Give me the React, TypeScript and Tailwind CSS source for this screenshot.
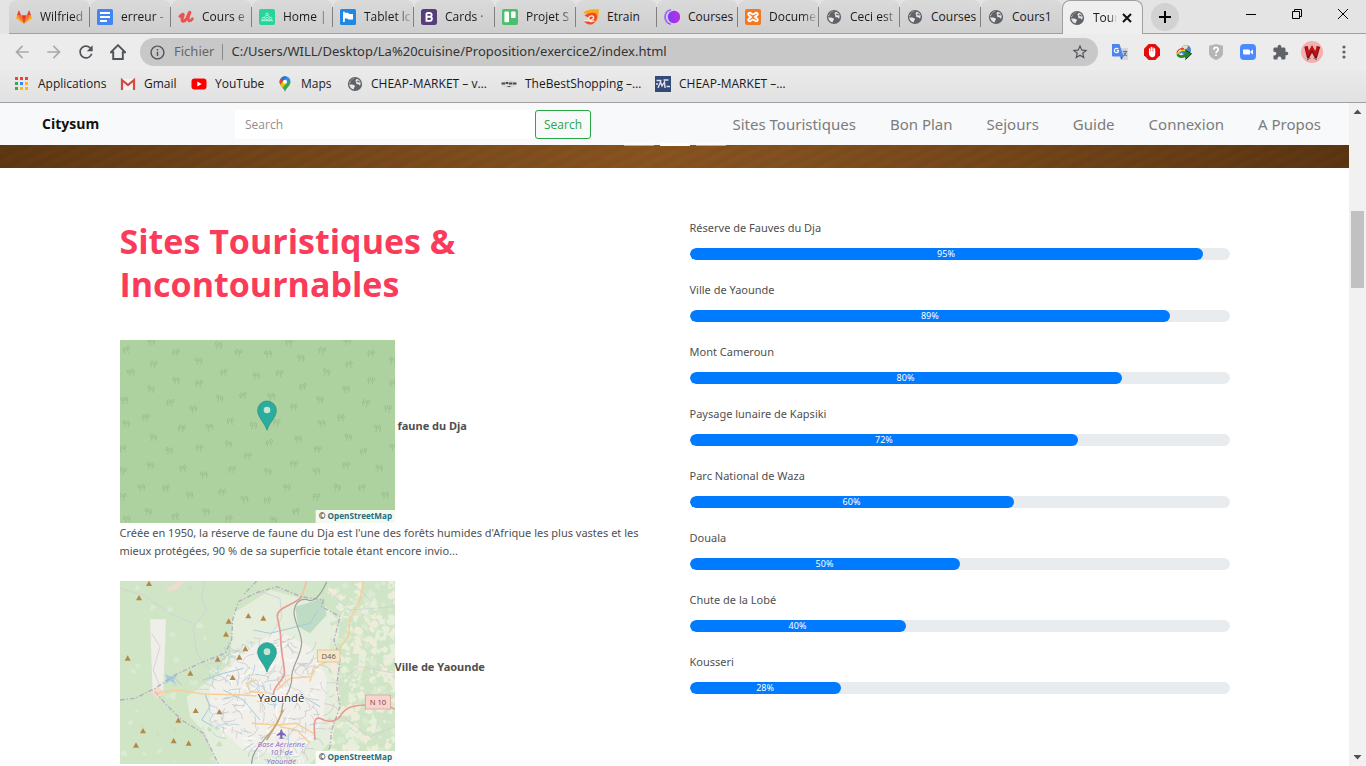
import React from "react";
import { MdArrowBack, MdArrowForward, MdRefresh, MdInfoOutline, MdStarBorder, MdExtension } from "react-icons/md";

const ui = "font-['Open_Sans','Noto_Sans',sans-serif]";
const noto = "font-['Noto_Sans','Open_Sans',sans-serif]";

/* ---------- favicons and small logos ---------- */

function Globe() {
  return (
    <svg viewBox="0 0 16 16" className="size-4 shrink-0">
      <circle cx="8" cy="8" r="7.1" fill="#5f6368" />
      <path d="M8.2 2.2 6.4 3.1 6 4.4 4.2 5.3 2.4 7.2 2.5 8.6 5.3 8.4 7.4 9.2 8.1 10.5 7 11.8 6.8 13.2 5.2 13 3.6 11.7 2.3 9.2 2.2 6.6 5.3 2.8Z" fill="#e6e6e6" />
      <path d="M3.2 5.2 5.6 3 8.6 2.4 7 4.6 4.4 6.2Z" fill="#5f6368" />
      <path d="M10 2.7 12.2 4.1 13.6 6.6 13.4 9.1 12.3 9.4 11.7 8.3 9.8 8.2 9 6.9 9.5 5.6 8.4 5.2 8.6 4Z" fill="#e6e6e6" />
      <path d="M10 4.6 12.4 5 12.8 6.4 10.6 6.2Z" fill="#5f6368" />
    </svg>
  );
}

function Gitlab() {
  return (
    <svg viewBox="0 0 16 16" className="size-4 shrink-0">
      <path d="M8 15 5.1 6.3H10.9Z" fill="#e24329" />
      <path d="M8 15 5.1 6.3H1Z" fill="#fc6d26" />
      <path d="M8 15 10.9 6.3H15Z" fill="#fc6d26" />
      <path d="M1 6.3 0 9.2 8 15Z" fill="#fca326" />
      <path d="M15 6.3 16 9.2 8 15Z" fill="#fca326" />
      <path d="M1 6.3 2.9 1 5.1 6.3ZM15 6.3 13.1 1 10.9 6.3Z" fill="#e24329" />
    </svg>
  );
}

function Docs() {
  return (
    <svg viewBox="0 0 16 16" className="size-4 shrink-0">
      <rect width="16" height="16" rx="1.5" fill="#4285f4" />
      <path d="M3 4h10M3 8h10M3 12h7" stroke="#fff" strokeWidth="1.8" />
    </svg>
  );
}

function Udemy() {
  return (
    <svg viewBox="0 0 16 16" className="size-4 shrink-0" fill="none" stroke="#ec5252" strokeLinecap="round" strokeLinejoin="round">
      <path d="M2 7.4C3 6.2 4 5 5 5.2 6 6 3.600 9.200 4 11.300 4.800 13.400 7.600 11.400 9 9 10 7 10.800 4.600 11.600 3.400" strokeWidth="3" />
      <path d="M12 3.600C10.800 6.600 9.600 10.400 10.800 11.600 11.800 12.400 13.200 11.200 14.400 9.800" strokeWidth="2.700" />
    </svg>
  );
}

function HomeFav() {
  return (
    <svg viewBox="0 0 16 16" className="size-4 shrink-0">
      <rect width="16" height="16" rx="2" fill="#26d59a" />
      <g fill="none" stroke="#b9f5e1" strokeWidth="1">
        <circle cx="8" cy="5.4" r="1.300" />
        <circle cx="4.5" cy="9.600" r="1.300" />
        <circle cx="8" cy="9.600" r="1.300" />
        <circle cx="11.5" cy="9.600" r="1.300" />
        <path d="M7 6.5 5 8.600M9 6.5 11 8.600M2 11.700h12" />
      </g>
    </svg>
  );
}

function TabletFav() {
  return (
    <svg viewBox="0 0 16 16" className="size-4 shrink-0">
      <rect width="16" height="16" rx="1.5" fill="#1e88e5" />
      <path d="M3 2.800h1.800v1h3.400L9.200 5H13v5.400H8.400l-1-.9H4.800V13H3Z" fill="#fff" />
    </svg>
  );
}

function BootstrapFav() {
  return (
    <svg viewBox="0 0 16 16" className="size-4 shrink-0">
      <rect width="16" height="16" rx="2.5" fill="#563d7c" />
      <path d="M5.5 4h3.2a1.8 1.8 0 0 1 .3 3.7H5.5m3.3 0a2.1 2.1 0 0 1 0 4.2H5.5V4" fill="none" stroke="#fff" strokeWidth="1.9" />
    </svg>
  );
}

function Trello() {
  return (
    <svg viewBox="0 0 16 16" className="size-4 shrink-0">
      <rect width="16" height="16" rx="2" fill="#4bbf6b" />
      <rect x="2.4" y="2.6" width="4.6" height="10.6" rx=".8" fill="#fff" />
      <rect x="9" y="2.6" width="4.6" height="6.4" rx=".8" fill="#fff" />
    </svg>
  );
}

function Etrain() {
  return (
    <svg viewBox="0 0 16 16" className="size-4 shrink-0">
      <path d="M.3 4.500C2 1.200 6 .2 15.800.3 15.800 5 15.600 9.500 13.500 12.500L12 5Z" fill="#f9a81b" />
      <path d="M1.500 6.500C5 3.500 10 3 13.200 4.500 15.200 8 13.500 13 9.500 15.200 5.500 16.300 2.500 14.500 1 12.200L8 10.500 5 8.500Z" fill="#ee4d23" />
      <path d="M1 11.200C4.500 12.600 10.600 11.400 10.600 8.600 10.600 6.200 6.400 6.200 5.400 9.200 4.900 12.400 8 13.600 11.400 11.600" fill="none" stroke="#f6e3da" strokeWidth="1.500" />
    </svg>
  );
}

function PurpleFav() {
  return (
    <svg viewBox="0 0 16 16" className="size-4 shrink-0">
      <defs>
        <linearGradient id="violet" x1="0" x2="1">
          <stop offset="0" stopColor="#7a3df5" />
          <stop offset="1" stopColor="#c32be8" />
        </linearGradient>
      </defs>
      <circle cx="10" cy="8" r="6.200" fill="url(#violet)" />
      <path d="M6.800.7A7.600 7.600 0 0 0 6.800 15.300" fill="none" stroke="#8b4cf3" strokeWidth="1.300" />
      <path d="M4 1.600A7.800 7.800 0 0 0 4 14.400" fill="none" stroke="#b07cf4" strokeWidth="1.200" />
    </svg>
  );
}

function Xampp() {
  return (
    <svg viewBox="0 0 16 16" className="size-4 shrink-0">
      <rect width="16" height="16" rx="2" fill="#f37623" />
      <path d="M4.800 3.600C3.200 3.600 2.600 5.600 4 6.400L6 8 4 9.600C2.600 10.400 3.200 12.400 4.800 12.400 6.200 12.400 6.200 10.600 8 10.600 9.800 10.600 9.800 12.400 11.200 12.400 12.800 12.400 13.400 10.400 12 9.600L10 8 12 6.400C13.400 5.600 12.800 3.600 11.200 3.600 9.800 3.600 9.800 5.400 8 5.400 6.200 5.400 6.200 3.600 4.800 3.600Z" fill="none" stroke="#fff" strokeWidth="1.900" />
    </svg>
  );
}

const tabs: { title: string; icon: React.ReactNode }[] = [
  { title: "Wilfried", icon: <Gitlab /> },
  { title: "erreur -", icon: <Docs /> },
  { title: "Cours e", icon: <Udemy /> },
  { title: "Home |", icon: <HomeFav /> },
  { title: "Tablet lc", icon: <TabletFav /> },
  { title: "Cards ·", icon: <BootstrapFav /> },
  { title: "Projet S", icon: <Trello /> },
  { title: "Etrain", icon: <Etrain /> },
  { title: "Courses", icon: <PurpleFav /> },
  { title: "Docume", icon: <Xampp /> },
  { title: "Ceci est", icon: <Globe /> },
  { title: "Courses", icon: <Globe /> },
  { title: "Cours1", icon: <Globe /> },
];

const whole = ["Etrain", "Courses", "Cours1"];
const fade = "[mask-image:linear-gradient(to_right,black_68%,transparent_100%)]";
const tabText = "ml-2 text-xs leading-4 whitespace-nowrap text-[#1a1a1a]";

function TabStrip() {
  return (
    <div className="flex h-[34px] shrink-0 bg-[#e4e4e4] pl-[9px]">
      {tabs.map((t, i) => (
        <button
          key={i}
          className="flex w-[81px] shrink-0 items-center rounded-t-lg border-b border-[#a0a0a0] bg-linear-to-b from-[#dadada] to-[#cecece] pl-[7px] text-left"
        >
          {t.icon}
          <span className={whole.includes(t.title) ? `${tabText} flex-1` : `${tabText} flex-1 ${fade}`}>{t.title}</span>
          <span className={i === 12 ? "h-5 w-px" : "h-5 w-px bg-[#808080]"} />
        </button>
      ))}
      <div className="flex w-[81px] shrink-0 items-center rounded-t-lg border-x border-t border-[#a0a0a0] bg-[#efefef] pl-[6px]">
        <Globe />
        <span className={`${tabText} w-6 ${fade}`}>Tour</span>
        <button aria-label="Fermer l'onglet" className="ml-0.5 flex size-4 items-center justify-center">
          <svg viewBox="0 0 10 10" className="size-[10px]">
            <path d="m1 1 8 8M9 1 1 9" stroke="#111" strokeWidth="2" />
          </svg>
        </button>
      </div>
      <div className="flex flex-1 items-center border-b border-[#a0a0a0] pl-2">
        <button aria-label="Nouvel onglet" className="flex size-7 items-center justify-center rounded-full bg-[#d2d2d2]">
          <svg viewBox="0 0 12 12" className="size-3">
            <path d="M6 0v12M0 6h12" stroke="#000" strokeWidth="2" />
          </svg>
        </button>
        <div className="ml-auto flex h-full">
          <button aria-label="Réduire" className="flex h-7 w-[46px] items-center justify-center">
            <svg viewBox="0 0 10 10" className="size-[10px]"><path d="M0 5.500h10" stroke="#000" /></svg>
          </button>
          <button aria-label="Restaurer" className="flex h-7 w-[46px] items-center justify-center">
            <svg viewBox="0 0 10 10" className="size-[10px]" fill="none" stroke="#000"><path d="M.5 2.500h7v7h-7zM2.500 2.500v-2h7v7h-2" /></svg>
          </button>
          <button aria-label="Fermer" className="flex h-7 w-[46px] items-center justify-center">
            <svg viewBox="0 0 10 10" className="size-[10px]"><path d="m0 0 10 10M10 0 0 10" stroke="#000" /></svg>
          </button>
        </div>
      </div>
    </div>
  );
}

/* ---------- extension icons ---------- */

const extensions: { name: string; icon: React.ReactNode }[] = [
  {
    name: "Google Traduction",
    icon: (
      <svg viewBox="0 0 16 16" className="size-4">
        <path d="M6 4h10v12H9Z" fill="#d3d6da" />
        <path d="M0 0h7.500l4 12.500H1.200A1.200 1.200 0 0 1 0 11.300Z" fill="#4a86ee" />
        <path d="M8 12.500h3.500L9.300 15.800Z" fill="#2f62c9" />
        <path d="M6.300 5.200A2.200 2.200 0 1 0 6.300 7.900V6.600H4.700" fill="none" stroke="#fff" strokeWidth="1.200" />
        <path d="M10.800 7.500h4.400M13 6.500v1M14.300 7.800c-.4 2-1.800 3.400-3 4.200M11.800 8.800c.6 1.400 1.800 2.600 3 3.200" fill="none" stroke="#5e7390" strokeWidth="1.100" />
      </svg>
    ),
  },
  {
    name: "AdBlock",
    icon: (
      <svg viewBox="0 0 16 16" className="size-4">
        <path d="M4.700 0h6.600L16 4.700v6.600L11.300 16H4.700L0 11.300V4.700Z" fill="#e40d0d" />
        <path d="M5.600 9V5M7.300 8V3.500M9 8V3.800M10.600 8.500V5" stroke="#fff" strokeWidth="1.300" strokeLinecap="round" />
        <path d="M5 7.500h6.200v2.800c0 1.700-1 2.900-2.800 2.900-2 0-2.700-1-3.400-2.900Z" fill="#fff" />
      </svg>
    ),
  },
  {
    name: "IDM",
    icon: (
      <svg viewBox="0 0 16 16" className="size-4">
        <circle cx="10" cy="6" r="5" fill="#4b86cc" />
        <path d="M6.200 3.200c1.500-2 4-2.400 6-1.400L11 4.600 8 5.500Z" fill="#e4e6b4" />
        <path d="M.8 9.500C1.500 6 4.500 4.200 8 4.800" fill="none" stroke="#d93a2b" strokeWidth="1.200" />
        <path d="M1.200 10.500C2.500 7.500 5 6 9 6.500" fill="none" stroke="#f5cf30" strokeWidth="1.500" />
        <path d="M.6 10.500C1 13.500 5 14.800 9 13.200L9.500 15.500 15.500 9.800 9.500 6.500 9 9C7 11.500 3.500 12 2.500 9.500Z" fill="#1f8a2d" />
        <path d="M9.500 6.300 15.500 9.800 9.500 15.500" fill="none" stroke="#143316" />
        <path d="M3.500 9.500C5 8 7 7.600 8.800 8.300" fill="none" stroke="#3c6fc4" strokeWidth="1.300" />
      </svg>
    ),
  },
  {
    name: "Protection",
    icon: (
      <svg viewBox="0 0 16 16" className="size-4">
        <path d="M8 0 15 1.800V9c0 3.500-3 5.500-7 7-4-1.500-7-3.500-7-7V1.800Z" fill="#b5b5b5" />
        <path d="M5.800 5.700c0-3 4.500-3 4.500-.3C10.300 7 8 7.200 8 9.200M8 10.500v1.600" fill="none" stroke="#fff" strokeWidth="1.700" />
      </svg>
    ),
  },
  {
    name: "Zoom",
    icon: (
      <svg viewBox="0 0 16 16" className="size-4">
        <rect width="16" height="16" rx="4" fill="#4a8cff" />
        <path d="M3 5.500h5.500A1.500 1.500 0 0 1 10 7v3.500H4.500A1.500 1.500 0 0 1 3 9Z" fill="#fff" />
        <path d="m10.500 7.300 2.500-1.800v5l-2.500-1.800Z" fill="#fff" />
      </svg>
    ),
  },
  { name: "Extensions", icon: <MdExtension className="size-[17px] text-[#5f6368]" /> },
  {
    name: "Profil",
    icon: (
      <svg viewBox="0 0 22 22" className="size-[22px]">
        <circle cx="11" cy="11" r="11" fill="#f3b0b0" />
        <path d="m5 5.500 2.300 9.500L11 8l3.700 7L17.500 5.500" fill="none" stroke="#7d0d0d" strokeWidth="3.400" />
        <path d="m4.800 5.300 2.200 8L11 6.800l3.700 6.500L17 5.300" fill="none" stroke="#c51212" strokeWidth="2.200" />
        <path d="M6 17.500h3.500M12.500 17.500H16" stroke="#8d7474" />
      </svg>
    ),
  },
  {
    name: "Menu",
    icon: (
      <svg viewBox="0 0 16 16" className="size-4" fill="#5f6368">
        <circle cx="8" cy="3" r="1.600" /><circle cx="8" cy="8" r="1.600" /><circle cx="8" cy="13" r="1.600" />
      </svg>
    ),
  },
];

function Toolbar() {
  return (
    <div className="flex h-9 shrink-0 items-center bg-[#ececec] pr-[6px] pl-[6px]">
      <button aria-label="Retour" className="flex w-8 justify-center text-[#a9a9a9]"><MdArrowBack className="size-5" /></button>
      <button aria-label="Avancer" className="flex w-8 justify-center text-[#a9a9a9]"><MdArrowForward className="size-5" /></button>
      <button aria-label="Actualiser" className="flex w-8 justify-center text-[#505357]"><MdRefresh className="size-5" /></button>
      <button aria-label="Accueil" className="flex w-8 justify-center">
        <svg viewBox="0 0 16 16" className="size-4"><path d="M1 8.200 8 1.200l7 7h-2.200V15H3.200V8.200Z" fill="none" stroke="#505357" strokeWidth="1.900" /></svg>
      </button>
      <div className={`ml-[6px] flex h-7 flex-1 items-center rounded-full bg-[#c8c8c8] pr-[9px] pl-[9px] ${noto}`}>
        <MdInfoOutline className="size-[17px] text-[#505357]" />
        <span className="ml-2 text-[13px] text-[#666]">Fichier</span>
        <span className="mx-2 h-4 w-px bg-[#8a8a8a]" />
        <input aria-label="Adresse" readOnly value="C:/Users/WILL/Desktop/La%20cuisine/Proposition/exercice2/index.html" className="flex-1 bg-transparent text-[13px] text-[#333] outline-none" />
        <button aria-label="Ajouter aux favoris"><MdStarBorder className="size-[18px] text-[#505357]" /></button>
      </div>
      <div className="ml-[6px] flex">
        {extensions.map((e) => (
          <button key={e.name} aria-label={e.name} className="flex size-8 items-center justify-center">{e.icon}</button>
        ))}
      </div>
    </div>
  );
}

const appDots = ["#ea4335", "#ea4335", "#ea4335", "#34a853", "#4285f4", "#fbbc05", "#34a853", "#fbbc05", "#fbbc05"];

function Bookmarks() {
  const link = "flex shrink-0 items-center gap-2 whitespace-nowrap";
  return (
    <nav className="flex h-[33px] shrink-0 items-center border-b border-[#a0a0a0] bg-linear-to-b from-[#eaeaea] to-[#e2e2e2] pb-1 pl-[14px] text-xs text-[#1a1a1a]">
      <a href="#apps" className={`${link} w-[106px]`}>
        <svg viewBox="0 0 16 16" className="size-4">
          {appDots.map((c, i) => <rect key={i} x={1 + (i % 3) * 5} y={1 + Math.floor(i / 3) * 5} width="3" height="3" fill={c} />)}
        </svg>
        Applications
      </a>
      <a href="#gmail" className={`${link} w-[71px]`}>
        <svg viewBox="0 0 16 16" className="size-4">
          <path d="M1 3h14v11H1Z" fill="#f3f3f3" />
          <path d="M2 14V4l6 5 6-5v10" fill="none" stroke="#d54b3d" strokeWidth="2.200" />
        </svg>
        Gmail
      </a>
      <a href="#youtube" className={`${link} w-[86px]`}>
        <svg viewBox="0 0 16 16" className="size-4">
          <rect x=".5" y="2.500" width="15" height="11" rx="3" fill="#f00" /><path d="M6.300 5.500v5L10.700 8Z" fill="#fff" />
        </svg>
        YouTube
      </a>
      <a href="#maps" className={`${link} w-[70px]`}>
        <svg viewBox="0 0 16 16" className="size-4">
          <path d="M8 16C7 12 2.500 10 2.500 5.800A5.500 5.500 0 0 1 13.500 5.800C13.500 10 9 12 8 16Z" fill="#34a853" />
          <path d="M3.900 2.300 6.200 4.400 3.300 8.500A5.500 5.500 0 0 1 3.900 2.300Z" fill="#ea4335" />
          <path d="M3.900 2.300A5.500 5.500 0 0 1 10 .8L6.200 5.200Z" fill="#1a73e8" />
          <path d="M10 .8a5.500 5.500 0 0 1 3 2.800L9.600 7.400 8 3.500Z" fill="#4285f4" />
          <path d="m3.300 8.700 3-3.600 3.200 2.200L5.400 12Z" fill="#fbbc04" />
          <circle cx="8" cy="5.800" r="2" fill="#fff" />
        </svg>
        Maps
      </a>
      <a href="#cheap" className={`${link} w-[154px]`}><Globe />CHEAP-MARKET – v…</a>
      <a href="#best" className={`${link} w-[154px]`}>
        <svg viewBox="0 0 16 16" className="size-4">
          <ellipse cx="8" cy="8" rx="7.500" ry="4" fill="#dadada" />
          <path d="M.5 7.500h3.500M4.600 7h2.800M8 7.500h3M11.600 7.500h3.900" stroke="#4a4a4a" strokeWidth="1.800" /><path d="M6.500 10.500h3" stroke="#555" />
        </svg>
        TheBestShopping –…
      </a>
      <a href="#cheap2" className={link}>
        <svg viewBox="0 0 16 16" className="size-4">
          <rect width="16" height="16" fill="#33497a" />
          <path d="M1.500 4.500h5M8.500 4h5M3 12 5.500 6 7 10 9.500 6 10 12M11.500 10.500H15M1 8h2" fill="none" stroke="#dde2ee" strokeWidth="1.400" />
        </svg>
        CHEAP-MARKET –…
      </a>
    </nav>
  );
}

/* ---------- maps ---------- */

function Pin({ x, y }: { x: number; y: number }) {
  return (
    <g transform={`translate(${x} ${y})`}>
      <path d="M0 0C-7-24-28-38-28-60A28 28 0 0 1 28-60C28-38 7-24 0 0Z" fill="#2bad9d" stroke="#218c7f" strokeWidth="2" />
      <circle cy="-61" r="10" fill="#c9e4d5" />
    </g>
  );
}

function Attribution({ x, y }: { x: number; y: number }) {
  return (
    <g>
      <rect x={x} y={y} width="238" height="40" fill="#fff" fillOpacity=".85" />
      <text x={x + 9} y={y + 27} fontSize="24.500" fontWeight="700" fontFamily="'Open Sans', sans-serif" fill="#226f80">
        <tspan fill="#333">© </tspan>OpenStreetMap
      </text>
    </g>
  );
}

const trees: [number, number][] = [
  [50, 60], [123, 36], [198, 68], [325, 46], [386, 68], [474, 72], [538, 38], [572, 85], [637, 62], [711, 34], [784, 71], [266, 94], [131, 103], [62, 128], [342, 128], [438, 138], [509, 131], [649, 127], [718, 104], [198, 152], [268, 161], [122, 178], [580, 171], [708, 178], [784, 152], [848, 92], [850, 160], [43, 211], [181, 218], [328, 206], [400, 197], [484, 200], [553, 232], [629, 210], [768, 219], [250, 238], [108, 263], [48, 282], [216, 295], [299, 292], [362, 274], [430, 287], [500, 278], [635, 281], [694, 264], [802, 295], [835, 236], [129, 323], [40, 357], [177, 362], [269, 354], [355, 343], [479, 339], [564, 328], [624, 358], [714, 322], [762, 365], [850, 352], [414, 378], [120, 407], [220, 416], [281, 435], [367, 419], [473, 426], [552, 402], [619, 424], [709, 407], [807, 415], [38, 423], [94, 473], [169, 475], [238, 496], [337, 487], [404, 508], [473, 512], [530, 473], [619, 501], [681, 473], [757, 474], [825, 496], [38, 500], [114, 546], [197, 560], [288, 546], [357, 567], [490, 571], [559, 545], [50, 568],
];

function ForestMap() {
  return (
    <svg viewBox="30 30 825 549" className="h-[183px] w-[275px] shrink-0" role="img" aria-label="Carte de la réserve du Dja">
      <rect x="30" y="30" width="825" height="549" fill="#aed1a0" />
      <g fill="none" stroke="#98bc8b" strokeWidth="2.500">
        {trees.map(([x, y], i) => (
          <g key={i} transform={`translate(${x} ${y}) rotate(${(i * 37) % 30 - 15}) scale(${i % 2 ? 1 : -1} 1)`}>
            <ellipse cx="-6" cy="-5" rx="3.500" ry="5" /><ellipse cx="6" cy="-4" rx="3.500" ry="5" />
            <path d="M-2-4C-2 4-3 7-5 11M10-3C10 3 8 7 6 10" />
          </g>
        ))}
      </g>
      <Pin x={471} y={301} />
      <Attribution x={617} y={540} />
    </svg>
  );
}

function seeded(seed: number) {
  let s = seed;
  return () => {
    s = (s * 16807) % 2147483647;
    return s / 2147483647;
  };
}

const rnd = seeded(41);
const pickOf = (list: string[]) => list[Math.floor(rnd() * list.length)];
const blob = (x: number, y: number, r: number) => {
  const pts: string[] = [];
  for (let k = 0; k < 9; k++) {
    const a = (k / 9) * Math.PI * 2;
    const d = r * (0.5 + rnd() * 0.8);
    pts.push(`${Math.round(x + Math.cos(a) * d)},${Math.round(y + Math.sin(a) * d)}`);
  }
  return pts.join(" ");
};
const eastPatches = Array.from({ length: 420 }, () => ({
  p: blob(655 + rnd() * 200, 40 + rnd() * 540, 4 + rnd() * 11),
  c: pickOf(["#eceedb", "#e6efdc", "#cfe5c6", "#f1ebdb", "#d9ead0"]),
}));
const westPatches = Array.from({ length: 34 }, () => ({
  p: blob(30 + rnd() * 300, 40 + rnd() * 540, 4 + rnd() * 7),
  c: pickOf(["#d9ead3", "#c9e2c0", "#dcebd4"]),
}));
const streets = Array.from({ length: 260 }, () => {
  const a = rnd() * Math.PI * 2;
  const d = Math.sqrt(rnd());
  const x = 480 + Math.cos(a) * d * 185;
  const y = 385 + Math.sin(a) * d * 190;
  const dx = (rnd() - 0.5) * 75;
  const dy = (rnd() - 0.5) * 75;
  return {
    d: `M${Math.round(x)} ${Math.round(y)}q${Math.round(dx)} ${Math.round(dy * 0.2)} ${Math.round(dx * 1.1)} ${Math.round(dy)}`,
    c: pickOf(["#fff", "#cac9cd", "#d3ced6", "#aecfe0", "#c4cbce"]),
  };
});
const peaks: [number, number][] = [
  [117, 41], [87, 84], [415, 138], [460, 145], [356, 154], [348, 193], [406, 237], [388, 262], [323, 268], [53, 265], [241, 310], [368, 323], [257, 422], [328, 426], [205, 451], [99, 483], [191, 513], [236, 520], [78, 526],
];

function CityMap() {
  return (
    <svg viewBox="30 33 825 549" className="h-[183px] w-[275px] shrink-0" role="img" aria-label="Carte de Yaoundé">
      <rect x="30" y="33" width="825" height="549" fill="#cfe5c6" />
      <path d="M370 130 480 60 575 85 640 100 690 160 675 260 690 400 665 510 600 582H320L285 490 240 440 230 380 300 330 360 280Z" fill="#e5eedd" />
      <path d="M400 250 500 180 600 230 650 320 640 450 560 560 400 540 300 450 300 350Z" fill="#f1f0ea" />
      {westPatches.map((b, i) => <polygon key={i} points={b.p} fill={b.c} />)}
      {eastPatches.map((b, i) => <polygon key={i} points={b.p} fill={b.c} />)}
      <path d="M120 148h48l-8 215-32 10Z" fill="#efeee9" />
      <path d="M165 60 205 33h20l-20 22-25 8ZM120 365l25-15 22 20-28 16Z" fill="#f0dbcf" />
      <path d="M555 110 640 85 650 135 600 190 565 170Z" fill="#bedcc3" />
      <g fill="none" strokeWidth="2.500">
        {streets.map((s, i) => <path key={i} d={s.d} stroke={s.c} />)}
      </g>
      <g fill="none" stroke="#d2cfd6" strokeWidth="2.500">
        <path d="M30 55 100 75 180 130 250 160M285 33 275 80 290 120 250 170 260 250 290 290 350 330M125 190 150 230 130 300 150 350M440 60l70 25 5 60-40 60" />
        <path d="M690 330 750 290 855 310M700 440 780 500 855 470M650 60 720 120 855 110M720 33 780 90" />
      </g>
      <g fill="none" stroke="#a6cbe0" strokeWidth="3">
        <path d="M430 180 480 190 540 175 600 160 625 120M190 320 215 345M280 330l60-20 60-15M285 370l15 40-25 40 35 20M580 380l50 30M430 520l-30 20M340 360l60 30 50 60" />
      </g>
      <path d="m165 312 18 8 20-5-12 13 6 14-17-10-14 10 4-16Z" fill="#a6c8e2" />
      <g fill="none" stroke="#b9abc1" strokeWidth="4" strokeDasharray="14 6 4 6">
        <path d="M30 390 75 385 135 355 200 312 280 275 345 250 365 210 368 150 385 95 440 68 500 50 575 80 640 90 635 110 690 140 672 210 690 270 680 350 690 410 665 480 660 530 640 582" />
        <path d="M135 365 170 405 215 450 280 490 300 530 325 582M440 33 400 75" />
      </g>
      <path d="M135 370 200 360 280 372 400 375 440 378M440 330 410 340 420 365 470 370M600 320 540 325 500 360M600 335l10-40 60-30M510 470 560 480 600 520M760 33 750 90 720 150 715 200 670 260M425 460 500 465 560 460 610 490" fill="none" stroke="#f6cf98" strokeWidth="4.500" strokeLinejoin="round" />
      <path d="M575 80C555 105 500 110 502 140 504 160 512 175 512 200 512 250 525 290 523 310 520 335 490 345 490 375M615 510C612 470 608 440 630 445 655 460 675 455 690 440 705 410 735 405 770 405M840 410l15 8" fill="none" stroke="#e79a92" strokeWidth="5" />
      <path d="M590 33 575 80" stroke="#f3c0a4" strokeWidth="5" />
      <path d="M650 35C635 70 620 90 600 92 570 80 552 100 552 130 555 160 575 190 575 220 572 260 545 290 545 320 548 360 520 380 517 410 515 450 490 480 470 500 445 530 425 550 425 582" fill="none" stroke="#9c9f9b" strokeWidth="3.500" />
      <path d="m520 420-20 40-30 50" fill="none" stroke="#c9a56d" strokeWidth="5" />
      {peaks.map(([x, y], i) => <path key={i} d={`M${x} ${y - 9}l9 16h-18Z`} fill="#b3894a" />)}
      <g fontFamily="'Open Sans', sans-serif">
        <rect x="622" y="240" width="68" height="36" fill="#f5e6c8" stroke="#dcb886" strokeWidth="2" />
        <text x="656" y="266" fontSize="23" textAnchor="middle" fill="#6d5a3c">D46</text>
        <rect x="766" y="375" width="76" height="42" fill="#f8d4cf" stroke="#d59a92" strokeWidth="2" />
        <text x="804" y="404" fontSize="23" textAnchor="middle" fill="#744">N 10</text>
        <text x="513" y="395" fontSize="34" textAnchor="middle" fill="#222" stroke="#fff" strokeWidth="4" paintOrder="stroke">Yaoundé</text>
        <g fontSize="23" fontStyle="italic" textAnchor="middle" fill="#7d66b8" stroke="#fff" strokeOpacity=".7" strokeWidth="3" paintOrder="stroke">
          <text x="514" y="530">Base Aérienne</text>
          <text x="514" y="556">101 de</text>
          <text x="514" y="581">Yaoundé</text>
        </g>
      </g>
      <path d="M514 477q4 4 4 10l10 7v4l-10-3-1 7 4 4h-14l4-4-1-7-10 3v-4l10-7q0-6 4-10Z" fill="#7d66b8" />
      <Pin x={471} y={306} />
      <Attribution x={617} y={543} />
    </svg>
  );
}

/* ---------- site ---------- */

const navLinks = ["Sites Touristiques", "Bon Plan", "Sejours", "Guide", "Connexion", "A Propos"];

function SiteHeader() {
  return (
    <header className="flex h-[42px] shrink-0 items-center bg-[#f8f9fa] pr-7 pl-[42px]">
      <a href="#top" className="w-[193px] text-sm font-bold text-[#111]">Citysum</a>
      <form className="flex" onSubmit={(e) => e.preventDefault()}>
        <input type="search" aria-label="Search" placeholder="Search" className="h-[29px] w-[300px] bg-white px-[10px] text-xs outline-none placeholder:text-[#8f8f8f]" />
        <button className="h-[29px] w-14 rounded-[3px] border border-[#28a745] pt-px text-xs text-[#28a745]">Search</button>
      </form>
      <nav className={`ml-auto flex gap-[34px] text-[15px] whitespace-nowrap text-[#7b7c7d] ${noto}`}>
        {navLinks.map((l) => <a key={l} href="#nav">{l}</a>)}
      </nav>
    </header>
  );
}

function Banner() {
  return (
    <div className="relative h-[23px] shrink-0 bg-[repeating-linear-gradient(155deg,rgba(0,0,0,0.03)_0px,rgba(255,190,90,0.01)_5px,rgba(0,0,0,0.03)_11px),linear-gradient(to_right,#5d3711,#6e4218_16%,#87531f_48%,#82501f_58%,#704318_78%,#5a3511)]">
      <div className="absolute inset-x-0 -top-0.5 flex justify-center gap-[6px]">
        <span className="h-[3px] w-[30px] bg-white/50" />
        <span className="h-[3px] w-[30px] bg-white" />
        <span className="h-[3px] w-[30px] bg-white/50" />
      </div>
    </div>
  );
}

const sites = [
  { name: "Réserve de Fauves du Dja", value: 95 },
  { name: "Ville de Yaounde", value: 89 },
  { name: "Mont Cameroun", value: 80 },
  { name: "Paysage lunaire de Kapsiki", value: 72 },
  { name: "Parc National de Waza", value: 60 },
  { name: "Douala", value: 50 },
  { name: "Chute de la Lobé", value: 40 },
  { name: "Kousseri", value: 28 },
];

function Ratings() {
  return (
    <div>
      {sites.map((s) => (
        <div key={s.name} className="mb-[21px]">
          <p className="mb-[11px]">{s.name}</p>
          <div role="progressbar" aria-label={s.name} aria-valuenow={s.value} className="h-3 overflow-hidden rounded-full bg-[#e9ecef]">
            <div className="h-3 rounded-full bg-[#007bff] text-center text-[9px] leading-3 text-white" style={{ width: `${s.value}%` }}>{s.value}%</div>
          </div>
        </div>
      ))}
    </div>
  );
}

function Places() {
  return (
    <div>
      <h1 className={`mt-px mb-[34px] text-[34px] leading-[43px] font-bold text-[#fa3c5a] ${ui}`}>
        Sites Touristiques &amp; Incontournables
      </h1>
      <div className="flex items-center gap-[3px]">
        <ForestMap />
        <strong className="pb-3">faune du Dja</strong>
      </div>
      <p className="mt-px mb-[21px]">
        Créée en 1950, la réserve de faune du Dja est l'une des forêts humides d'Afrique les plus vastes et les mieux protégées, 90 % de sa superficie totale étant encore invio...
      </p>
      <div className="flex items-center">
        <CityMap />
        <strong className="pb-3">Ville de Yaounde</strong>
      </div>
    </div>
  );
}

function Scrollbar() {
  return (
    <div className="flex w-[17px] shrink-0 flex-col items-center bg-[#f1f1f1]">
      <svg viewBox="0 0 17 17" className="size-[17px] shrink-0"><path d="M4.500 11h8l-4-4.500Z" fill="#505050" /></svg>
      <div className="mt-[91px] h-[77px] w-[13px] bg-[#c1c1c1]" />
      <svg viewBox="0 0 17 17" className="mt-auto size-[17px] shrink-0"><path d="M4.500 6h8l-4 4.500Z" fill="#505050" /></svg>
    </div>
  );
}

export default function App() {
  return (
    <div className={`flex h-screen flex-col overflow-hidden bg-white ${ui}`}>
      <TabStrip />
      <Toolbar />
      <Bookmarks />
      <div className="flex min-h-0 flex-1">
        <div className="flex min-w-0 flex-1 flex-col overflow-hidden">
          <SiteHeader />
          <Banner />
          <main className={`mx-auto grid w-full max-w-[1140px] grid-cols-2 gap-[30px] px-[15px] pt-[51px] text-[11px] leading-[18px] text-[#505050] ${noto}`}>
            <Places />
            <Ratings />
          </main>
        </div>
        <Scrollbar />
      </div>
    </div>
  );
}
